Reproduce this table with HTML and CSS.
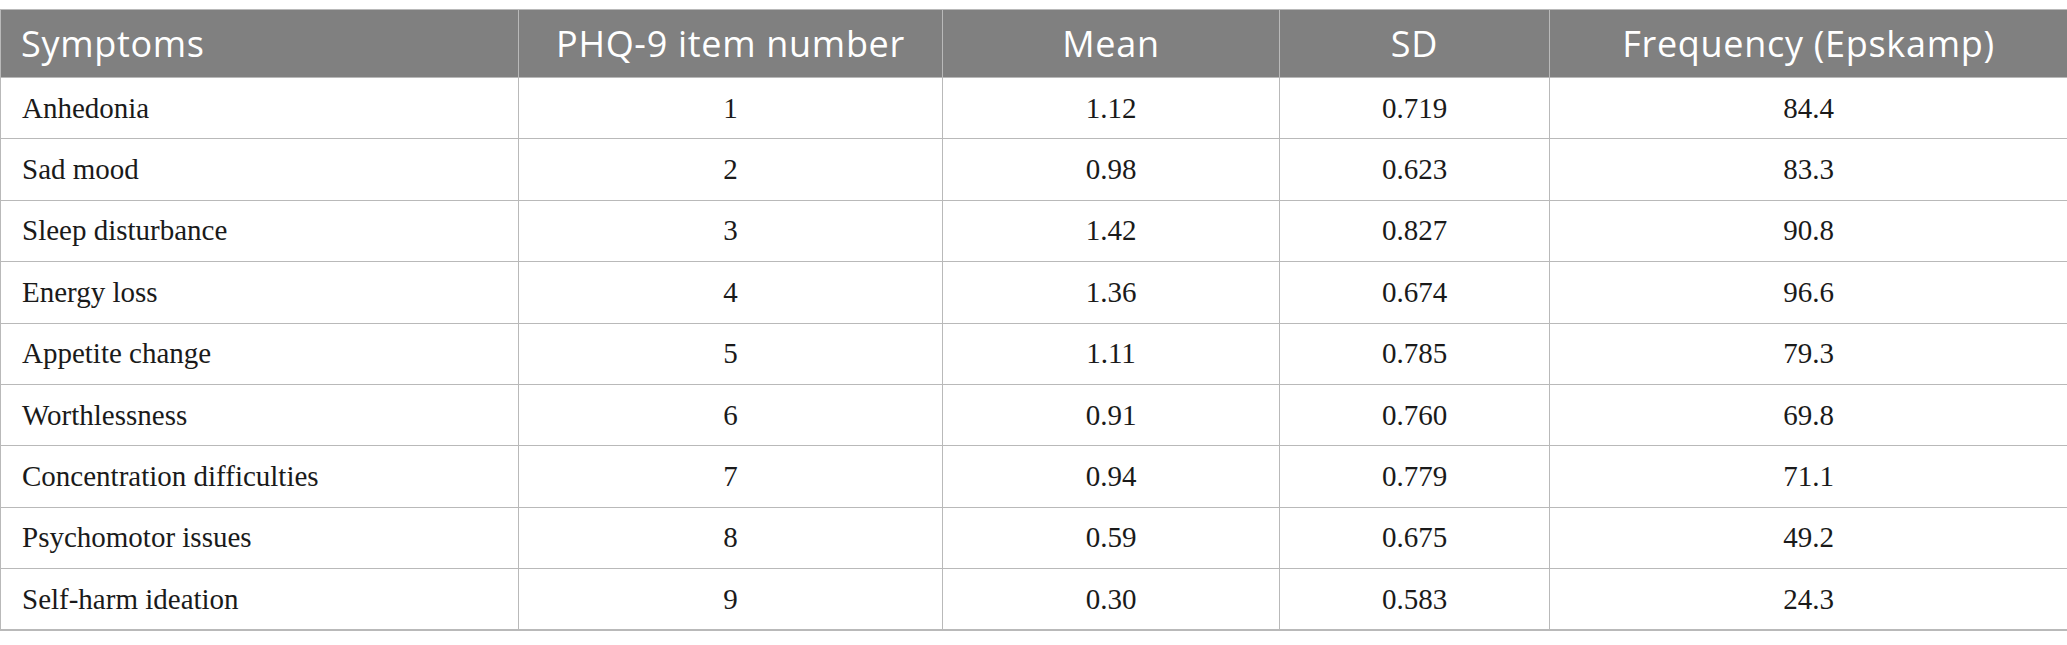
FILE: index.html
```html
<!DOCTYPE html>
<html lang="en">
<head>
<meta charset="utf-8">
<title>PHQ-9 symptoms</title>
<link rel="stylesheet" href="styles.css">
</head>
<body>
<table class="data">
  <colgroup>
    <col class="c1"><col class="c2"><col class="c3"><col class="c4"><col class="c5">
  </colgroup>
  <thead>
    <tr>
      <th class="left">Symptoms</th>
      <th>PHQ-9 item number</th>
      <th>Mean</th>
      <th>SD</th>
      <th>Frequency (Epskamp)</th>
    </tr>
  </thead>
  <tbody>
    <tr><td class="left">Anhedonia</td><td>1</td><td>1.12</td><td>0.719</td><td>84.4</td></tr>
    <tr><td class="left">Sad mood</td><td>2</td><td>0.98</td><td>0.623</td><td>83.3</td></tr>
    <tr><td class="left">Sleep disturbance</td><td>3</td><td>1.42</td><td>0.827</td><td>90.8</td></tr>
    <tr><td class="left">Energy loss</td><td>4</td><td>1.36</td><td>0.674</td><td>96.6</td></tr>
    <tr><td class="left">Appetite change</td><td>5</td><td>1.11</td><td>0.785</td><td>79.3</td></tr>
    <tr><td class="left">Worthlessness</td><td>6</td><td>0.91</td><td>0.760</td><td>69.8</td></tr>
    <tr><td class="left">Concentration difficulties</td><td>7</td><td>0.94</td><td>0.779</td><td>71.1</td></tr>
    <tr><td class="left">Psychomotor issues</td><td>8</td><td>0.59</td><td>0.675</td><td>49.2</td></tr>
    <tr><td class="left">Self-harm ideation</td><td>9</td><td>0.30</td><td>0.583</td><td>24.3</td></tr>
  </tbody>
</table>
</body>
</html>
```
FILE: styles.css
```css
html, body {
  margin: 0;
  padding: 0;
  background: #ffffff;
}
body {
  padding-top: 9px;
}
.data {
  width: 2067px;
  border-collapse: collapse;
  table-layout: fixed;
}
.c1 { width: 518px; }
.c2 { width: 424px; }
.c3 { width: 337px; }
.c4 { width: 270px; }
.c5 { width: 518px; }
.data th,
.data td {
  border: 1px solid #b9b9b9;
  text-align: center;
  vertical-align: middle;
  padding: 0 21px;
}
.data th {
  background: #808080;
  color: #ffffff;
  font-family: "Open Sans", "Noto Sans", sans-serif;
  font-weight: 400;
  font-size: 36px;
  letter-spacing: 0.7px;
  height: 68px;
  box-sizing: border-box;
}
.data th.left {
  padding-left: 20px;
}
.data td {
  font-family: "Liberation Serif", "Times New Roman", serif;
  font-size: 29px;
  color: #1a1a1a;
  height: 61.4px;
  box-sizing: border-box;
}
.data .left {
  text-align: left;
}
.data tbody tr:last-child td {
  border-bottom: 2px solid #b9b9b9;
}
```
